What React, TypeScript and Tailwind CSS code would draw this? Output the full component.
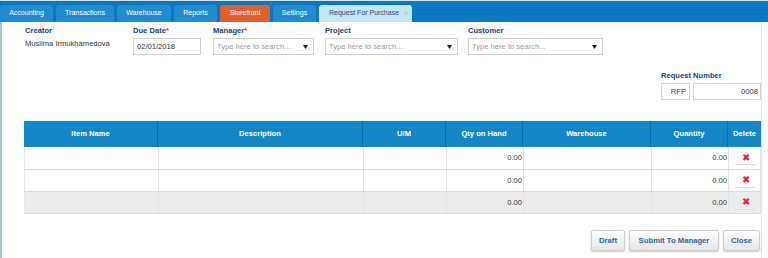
import { useState } from "react";

const tabs = [
  { label: "Accounting", w: "w-[53px]" },
  { label: "Transactions", w: "w-[58px]" },
  { label: "Warehouse", w: "w-[54px]" },
  { label: "Reports", w: "w-[43px]" },
  { label: "Storefront", w: "w-[50px]", orange: true },
  { label: "Settings", w: "w-[43px]" },
];

const columns = [
  "Item Name",
  "Description",
  "U/M",
  "Qty on Hand",
  "Warehouse",
  "Quantity",
  "Delete",
];

function Caret() {
  return (
    <svg width="5" height="4" viewBox="0 0 5 4" className="shrink-0">
      <path d="M0 0 L5 0 L2.5 4 Z" fill="#222" />
    </svg>
  );
}

function Label({ text, required }: { text: string; required?: boolean }) {
  return (
    <div className="h-[10px] leading-[10px] font-bold text-[#1d3f78] mb-[2px]">
      {text}
      {required && <span className="text-[#e8262c]">*</span>}
    </div>
  );
}

function SearchSelect({ width }: { width: string }) {
  return (
    <div
      className={`${width} h-[17px] border border-[#cfcfcf] bg-white flex items-center justify-between pl-[3px] pr-[5px]`}
    >
      <span className="text-[#9a9a9a]">Type here to search...</span>
      <Caret />
    </div>
  );
}

export default function App() {
  const [rows] = useState([0, 1, 2]);

  return (
    <div
      className="w-[768px] h-[258px] bg-white overflow-hidden text-[7.6px] text-[#333]"
      style={{ fontFamily: '"Liberation Sans", Arial, sans-serif' }}
    >
      {/* ================= TAB BAR ================= */}
      <div className="h-[22px] bg-[#0a78bf] border-t border-[#d9e6f0] pt-[4px] flex gap-[3px]">
        {tabs.map((t) => (
          <div
            key={t.label}
            className={`${t.w} h-[17px] rounded-t-[3px] flex items-center justify-center text-[7px] text-white ${
              t.orange ? "bg-[#e2612b]" : "bg-[#228cd2]"
            }`}
          >
            {t.label}
          </div>
        ))}
        <div className="w-[93px] h-[17px] rounded-t-[3px] bg-[#c4e4f8] flex items-center pl-[10px] text-[7px] text-[#2d4c6b]">
          Request For Purchase
          <span className="ml-[5px] text-[6px] text-[#8fb4cf]">×</span>
        </div>
      </div>

      {/* ================= PANEL ================= */}
      <div className="w-[762px] h-[236px] border-l-2 border-r border-l-[#a8c6e2] border-r-[#e4e4e4] pl-[23px]">
        {/* Form row */}
        <div className="flex pt-[4px]">
          <div className="w-[108px]">
            <Label text="Creator" />
            <div className="leading-[10px] pt-[1px]">Muslima Irmukhamedova</div>
          </div>
          <div className="w-[80px]">
            <Label text="Due Date" required />
            <div className="w-[68px] h-[17px] border border-[#cfcfcf] flex items-center pl-[3px] text-[#333]">
              02/01/2018
            </div>
          </div>
          <div className="w-[112px]">
            <Label text="Manager" required />
            <SearchSelect width="w-[101px]" />
          </div>
          <div className="w-[143px]">
            <Label text="Project" />
            <SearchSelect width="w-[133px]" />
          </div>
          <div>
            <Label text="Customer" />
            <SearchSelect width="w-[135px]" />
          </div>
        </div>

        {/* Request number */}
        <div className="flex justify-end mt-[16px]">
          <div className="w-[100px]">
            <div className="h-[10px] leading-[10px] font-bold text-[#1d3f78] mb-[2px]">
              Request Number
            </div>
            <div className="flex gap-[3px]">
              <div className="w-[29px] h-[17px] border border-[#d4d4d4] flex items-center justify-end pr-[3px]">
                RFP
              </div>
              <div className="w-[68px] h-[17px] border border-[#d4d4d4] flex items-center justify-end pr-[2px]">
                0008
              </div>
            </div>
          </div>
        </div>

        {/* Table */}
        <div className="mt-[21px] -ml-[1px] w-[737px]">
          <div className="grid grid-cols-[134px_205px_83px_77px_128px_77px_33px] h-[26px] bg-[#1387c6]">
            {columns.map((c, i) => (
              <div
                key={c}
                className={`flex items-center justify-center font-bold text-white ${
                  i < columns.length - 1 ? "border-r border-[#0d6aa8]" : ""
                }`}
              >
                {c}
              </div>
            ))}
          </div>
          {rows.map((r) => (
            <div
              key={r}
              className={`grid grid-cols-[134px_205px_83px_77px_128px_77px_33px] border-b border-[#dcdcdc] ${
                r === 0 ? "h-[23px]" : "h-[22px]"
              } ${r === 2 ? "bg-[#ececec]" : "bg-white"} border-l border-r border-l-[#e6e6e6] border-r-[#e6e6e6]`}
            >
              <div className="border-r border-[#e3e3e3]" />
              <div className="border-r border-[#e3e3e3]" />
              <div className="border-r border-[#e3e3e3]" />
              <div className="border-r border-[#e3e3e3] flex items-center justify-end pr-[1px]">
                0.00
              </div>
              <div className="border-r border-[#e3e3e3]" />
              <div className="border-r border-[#e3e3e3] flex items-center justify-end pr-[1px]">
                0.00
              </div>
              <div className="flex items-center justify-center">
                <div className="w-[21px] h-[14px] border-b border-[#dedede] flex items-center justify-center text-[10px] leading-none text-[#e8262c]">
                  ✖
                </div>
              </div>
            </div>
          ))}
        </div>

        {/* Buttons */}
        <div className="flex justify-end gap-[4px] mt-[16px] pr-[1px]">
          {[
            { t: "Draft", w: "w-[34px]" },
            { t: "Submit To Manager", w: "w-[90px]" },
            { t: "Close", w: "w-[37px]" },
          ].map((b) => (
            <button
              key={b.t}
              className={`${b.w} h-[21px] border border-[#cdcdcd] rounded-[2px] bg-gradient-to-b from-white to-[#e6e6e6] shadow-[0_1px_2px_rgba(0,0,0,0.2)] font-bold text-[7.7px] text-[#2a66a3]`}
            >
              {b.t}
            </button>
          ))}
        </div>
      </div>
    </div>
  );
}
